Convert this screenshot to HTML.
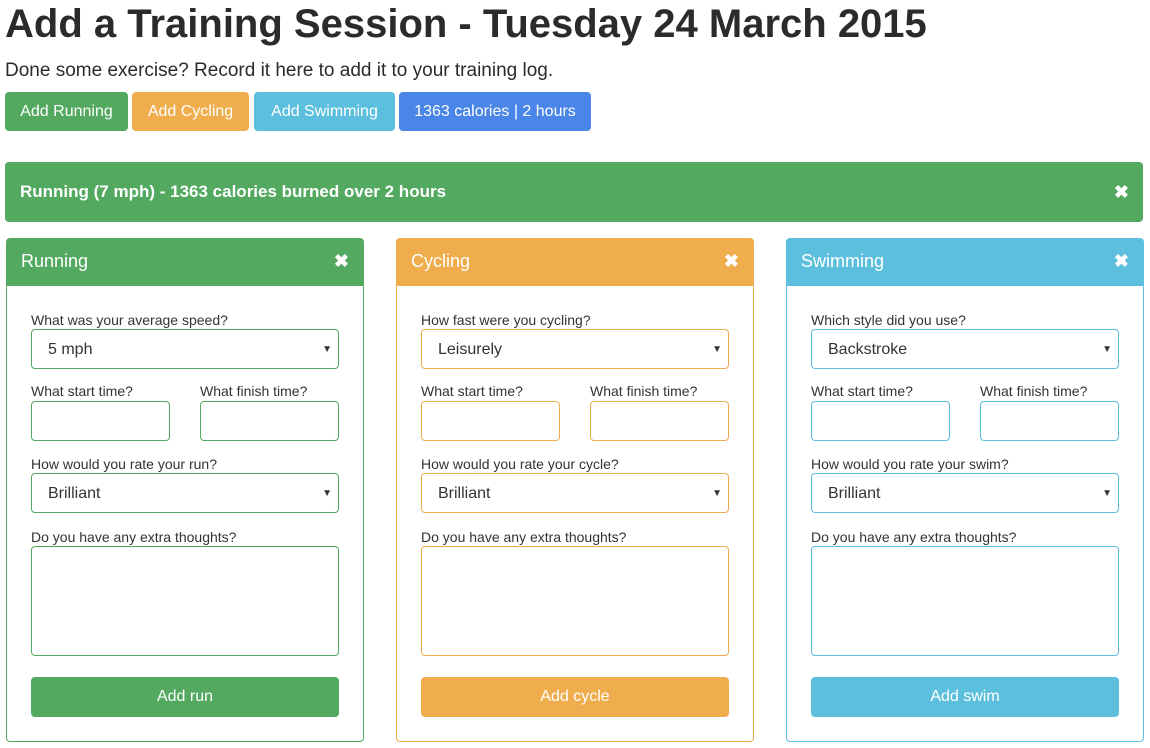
<!DOCTYPE html>
<html><head><style>
*{box-sizing:border-box;margin:0;padding:0}
body{width:1150px;height:748px;background:#fff;font-family:"Liberation Sans",sans-serif;color:#333;position:relative;overflow:hidden}
.a{position:absolute}
h1{position:absolute;left:5px;top:0;font-size:40px;font-weight:bold;color:#2b2b2b;letter-spacing:0px;line-height:48px;white-space:nowrap}
.sub{left:5px;top:59px;font-size:19px;line-height:24px;color:#2b2b2b}
.btn{top:92px;height:39px;border-radius:4px;color:#fff;font-size:16px;line-height:39px;text-align:center}
.g{background:#52a95f}.o{background:#efad4d}.c{background:#5bbfdd}.b{background:#4a86e8}
.alert{left:5px;top:162px;width:1138px;height:60px;border-radius:4px;background:#52a95f;color:#fff;font-size:17px;font-weight:bold;line-height:60px;padding-left:15px}
.x{position:absolute;right:14px;font-weight:bold;font-size:18px;color:#fff}
.p{top:238px;width:358px;height:504px;border:1px solid;border-radius:4px}
.ph{height:47px;color:#fff;font-size:18px;line-height:45px;padding-left:14px;position:relative}
.lb{position:absolute;left:24px;font-size:14px;color:#333}
.in{position:absolute;border:1px solid;border-radius:4px;background:#fff;font-size:16px;color:#333;padding-left:16px;line-height:39px}
.ar{position:absolute;right:6px;top:0;font-size:10px}
.bt{position:absolute;left:24px;top:438px;width:308px;height:40px;border-radius:4px;color:#fff;font-size:16px;line-height:40px;text-align:center}
</style></head><body>
<h1>Add a Training Session - Tuesday 24 March 2015</h1>
<div class="a sub">Done some exercise? Record it here to add it to your training log.</div>
<div class="a btn g" style="left:5px;width:123px">Add Running</div>
<div class="a btn o" style="left:132px;width:117px">Add Cycling</div>
<div class="a btn c" style="left:254px;width:141px">Add Swimming</div>
<div class="a btn b" style="left:399px;width:192px">1363 calories | 2 hours</div>
<div class="a alert">Running (7 mph) - 1363 calories burned over 2 hours<span class="x" style="top:0">✖</span></div>

<div class="a p" style="left:6px;border-color:#52a95f">
<div class="ph g">Running<span class="x" style="top:0">✖</span></div>
<div class="lb" style="top:73px">What was your average speed?</div>
<div class="in" style="left:24px;top:90px;width:308px;height:40px;border-color:#52a95f">5 mph<span class="ar">▼</span></div>
<div class="lb" style="top:144px">What start time?</div>
<div class="lb" style="top:144px;left:193px">What finish time?</div>
<div class="in" style="left:24px;top:162px;width:139px;height:40px;border-color:#52a95f"></div>
<div class="in" style="left:193px;top:162px;width:139px;height:40px;border-color:#52a95f"></div>
<div class="lb" style="top:217px">How would you rate your run?</div>
<div class="in" style="left:24px;top:234px;width:308px;height:40px;border-color:#52a95f">Brilliant<span class="ar">▼</span></div>
<div class="lb" style="top:290px">Do you have any extra thoughts?</div>
<div class="in" style="left:24px;top:307px;width:308px;height:110px;border-color:#52a95f"></div>
<div class="bt g">Add run</div>
</div>

<div class="a p" style="left:396px;border-color:#efad4d">
<div class="ph o">Cycling<span class="x" style="top:0">✖</span></div>
<div class="lb" style="top:73px">How fast were you cycling?</div>
<div class="in" style="left:24px;top:90px;width:308px;height:40px;border-color:#efad4d">Leisurely<span class="ar">▼</span></div>
<div class="lb" style="top:144px">What start time?</div>
<div class="lb" style="top:144px;left:193px">What finish time?</div>
<div class="in" style="left:24px;top:162px;width:139px;height:40px;border-color:#efad4d"></div>
<div class="in" style="left:193px;top:162px;width:139px;height:40px;border-color:#efad4d"></div>
<div class="lb" style="top:217px">How would you rate your cycle?</div>
<div class="in" style="left:24px;top:234px;width:308px;height:40px;border-color:#efad4d">Brilliant<span class="ar">▼</span></div>
<div class="lb" style="top:290px">Do you have any extra thoughts?</div>
<div class="in" style="left:24px;top:307px;width:308px;height:110px;border-color:#efad4d"></div>
<div class="bt o">Add cycle</div>
</div>

<div class="a p" style="left:786px;border-color:#5bbfdd">
<div class="ph c">Swimming<span class="x" style="top:0">✖</span></div>
<div class="lb" style="top:73px">Which style did you use?</div>
<div class="in" style="left:24px;top:90px;width:308px;height:40px;border-color:#5bbfdd">Backstroke<span class="ar">▼</span></div>
<div class="lb" style="top:144px">What start time?</div>
<div class="lb" style="top:144px;left:193px">What finish time?</div>
<div class="in" style="left:24px;top:162px;width:139px;height:40px;border-color:#5bbfdd"></div>
<div class="in" style="left:193px;top:162px;width:139px;height:40px;border-color:#5bbfdd"></div>
<div class="lb" style="top:217px">How would you rate your swim?</div>
<div class="in" style="left:24px;top:234px;width:308px;height:40px;border-color:#5bbfdd">Brilliant<span class="ar">▼</span></div>
<div class="lb" style="top:290px">Do you have any extra thoughts?</div>
<div class="in" style="left:24px;top:307px;width:308px;height:110px;border-color:#5bbfdd"></div>
<div class="bt c">Add swim</div>
</div>
</body></html>
